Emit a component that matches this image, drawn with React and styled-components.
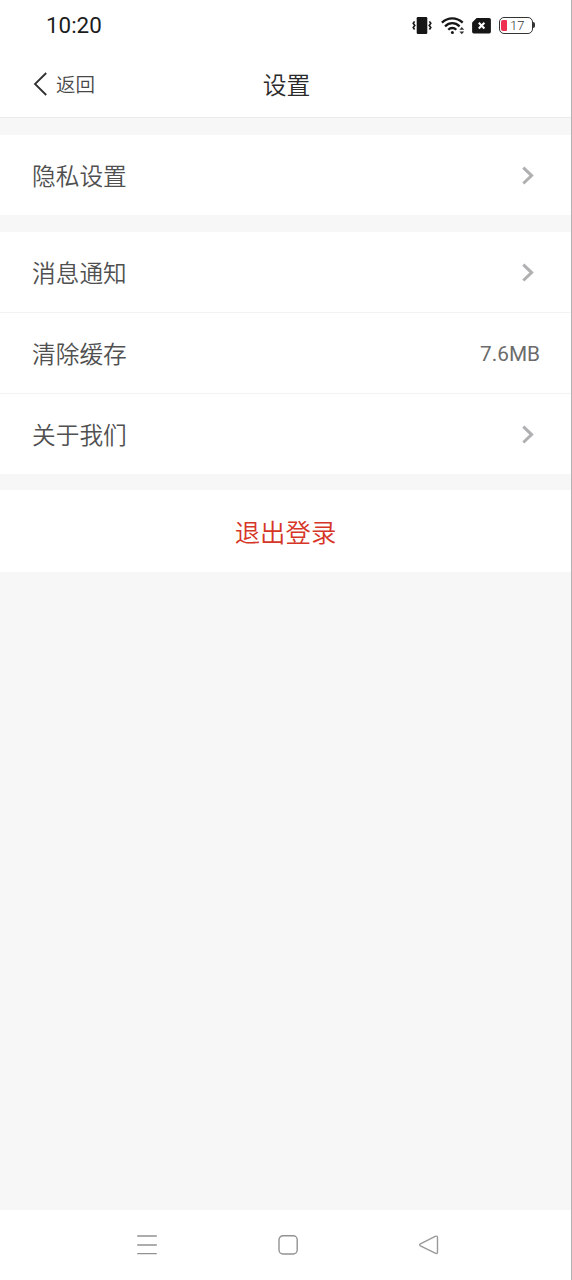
import React from "react";
import styled, { createGlobalStyle } from "styled-components";

const groups = [
  [{ label: "隐私设置" }],
  [
    { label: "消息通知" },
    { label: "清除缓存", value: "7.6MB" },
    { label: "关于我们" },
  ],
];

function StatusIcons() {
  return (
    <StIcons>
      <svg width="20" height="18" viewBox="0 0 20 18">
        <rect x="4.7" y="0" width="10.6" height="17" rx="1.2" fill="#161616" />
        <path
          d="M2.6 4.4L1.2 6.3L2.8 8.4L1.2 10.5L2.6 12.5M17.4 4.4L18.8 6.3L17.2 8.4L18.8 10.5L17.4 12.5"
          fill="none"
          stroke="#161616"
          strokeWidth="1.6"
        />
      </svg>
      <svg width="24" height="18" viewBox="0 0 24 18">
        <g fill="none" stroke="#161616" strokeWidth="2.3">
          <path d="M0.9 5.6Q5.5 1.3 11.3 1.3T21.7 5.6" />
          <path d="M4 9.3Q7.3 6.2 11.3 6.2T18.6 9.3" />
          <path d="M7.3 12.8Q9 11 11.3 11T15.3 12.8" />
        </g>
        <circle cx="11.4" cy="15.4" r="1.5" fill="#161616" />
        <path d="M18.4 12.8L20.8 10.1L23.2 12.8ZM18.4 14.6L20.8 17.3L23.2 14.6Z" fill="#333" />
      </svg>
      <svg width="19" height="16" viewBox="0 0 19 16">
        <path
          d="M4.6 0H17.2Q18.9 0 18.9 1.7V13.7Q18.9 15.4 17.2 15.4H1.8Q0.1 15.4 0.1 13.7V4.4Z"
          fill="#161616"
        />
        <path d="M6.8 4.8L12.4 10.4M12.4 4.8L6.8 10.4" stroke="#fff" strokeWidth="2.1" />
      </svg>
      <StBattery>
        <StLevel />
        <span>17</span>
      </StBattery>
    </StIcons>
  );
}

function Row({ label, value }) {
  return (
    <StRow>
      <StLabel>{label}</StLabel>
      {value ? (
        <StValue>{value}</StValue>
      ) : (
        <StArrow width="14" height="20" viewBox="0 0 14 20">
          <path d="M2.3 1.7L10.6 9.6L2.3 17.5" fill="none" stroke="#b0b0b2" strokeWidth="3" />
        </StArrow>
      )}
    </StRow>
  );
}

function App() {
  return (
    <>
      <GlobalStyle />
      <StPage>
        <StStatusBar>
          <StTime>10:20</StTime>
          <StatusIcons />
        </StStatusBar>
        <StHeader>
          <StBack>
            <svg width="15" height="24" viewBox="0 0 15 24">
              <path d="M13.2 1L2 12L13.2 23" fill="none" stroke="#303030" strokeWidth="1.8" />
            </svg>
            <span>返回</span>
          </StBack>
          <StTitle>设置</StTitle>
        </StHeader>
        <StContent>
          {groups.map((rows) => (
            <StGroup key={rows[0].label}>
              {rows.map((row) => (
                <Row key={row.label} {...row} />
              ))}
            </StGroup>
          ))}
          <StLogout>退出登录</StLogout>
        </StContent>
        <StNav>
          <svg width="22" height="22" viewBox="0 0 22 22">
            <path d="M1.2 2H20.8M1.2 11H20.8M1.2 19.6H20.8" stroke="#929292" strokeWidth="1.4" />
          </svg>
          <svg width="22" height="22" viewBox="0 0 22 22">
            <rect x="2" y="1.8" width="18.2" height="18.2" rx="4" fill="none" stroke="#929292" strokeWidth="1.4" />
          </svg>
          <svg width="22" height="22" viewBox="0 0 22 22">
            <path
              d="M2.4 9.8L17.2 2.3Q19.5 1.5 19.5 3.7V17.9Q19.5 20.1 17.2 19.2L2.4 11.8Q0.9 10.8 2.4 9.8Z"
              fill="none"
              stroke="#999"
              strokeWidth="1.4"
            />
          </svg>
        </StNav>
      </StPage>
    </>
  );
}

export default App;

const GlobalStyle = createGlobalStyle`
  * {
    box-sizing: border-box;
  }
  body {
    margin: 0;
    font-family: Roboto, "Noto Sans CJK SC", sans-serif;
  }
  svg {
    display: block;
    flex-shrink: 0;
  }
`;

const StPage = styled.div`
  display: flex;
  flex-direction: column;
  width: 572px;
  height: 1280px;
  border-right: 1px solid #b2b2b2;
  background-color: #f7f7f7;
`;

const StStatusBar = styled.div`
  display: flex;
  align-items: center;
  justify-content: space-between;
  height: 52px;
  padding: 0 36px 0 46px;
  background-color: #fff;
`;

const StTime = styled.div`
  color: #1c1c1c;
  font-size: 22.4px;
  line-height: 26px;
  margin-top: -2px;
`;

const StIcons = styled.div`
  display: flex;
  align-items: center;
  gap: 8px;
  padding-bottom: 1px;

  svg + svg {
    margin-left: 1px;
  }

  svg:nth-child(3) {
    margin-left: -1px;
  }
`;

const StBattery = styled.div`
  position: relative;
  display: flex;
  align-items: center;
  gap: 3px;
  width: 34px;
  height: 17px;
  margin-right: 2px;
  padding-left: 1px;
  border: 1.6px solid #333;
  border-radius: 5px;
  color: #333;
  font-size: 13px;
  font-weight: 300;
  line-height: 14px;

  &::after {
    content: "";
    position: absolute;
    right: -3px;
    top: 4px;
    width: 2px;
    height: 6px;
    border-radius: 0 2px 2px 0;
    background-color: #333;
  }
`;

const StLevel = styled.div`
  width: 6px;
  height: 11px;
  border-radius: 2px 1px 1px 2px;
  background-color: #ee2f50;
`;

const StHeader = styled.div`
  display: grid;
  grid-template-columns: 1fr auto 1fr;
  align-items: center;
  height: 66px;
  padding: 0 31px 0 33px;
  border-bottom: 1px solid #ebebeb;
  background-color: #fff;
`;

const StBack = styled.div`
  display: flex;
  align-items: center;
  gap: 8px;
  color: #484848;
  font-size: 19.5px;
  font-weight: 350;
  line-height: 28px;

  svg {
    margin-top: -2px;
  }
  span {
    padding-top: 2px;
  }
`;

const StTitle = styled.div`
  padding-top: 2px;
  color: #2a2a2a;
  font-size: 23.8px;
  font-weight: 350;
  line-height: 34px;
`;

const StContent = styled.div`
  flex: 1;
  padding-top: 17px;
`;

const StGroup = styled.div`
  background-color: #fff;

  & + & {
    margin-top: 17px;
  }
`;

const StRow = styled.div`
  display: flex;
  align-items: center;
  justify-content: space-between;
  height: 80px;
  padding: 2px 31px 0 32px;

  & + & {
    height: 81px;
    border-top: 1px solid #f3f3f3;
  }
`;

const StLabel = styled.div`
  padding-top: 2px;
  color: #505050;
  font-size: 23.7px;
  font-weight: 350;
  line-height: 34px;
`;

const StValue = styled.div`
  color: #6b6b6b;
  font-size: 20.8px;
  line-height: 28px;
`;

const StArrow = styled.svg`
  margin-right: 5px;
`;

const StLogout = styled.div`
  height: 82px;
  margin-top: 16px;
  background-color: #fff;
  color: #d63627;
  font-size: 25.4px;
  font-weight: 350;
  line-height: 86px;
  text-align: center;
`;

const StNav = styled.div`
  display: flex;
  justify-content: space-between;
  height: 70px;
  padding: 24px 131px 0 136px;
  background-color: #fff;
`;
